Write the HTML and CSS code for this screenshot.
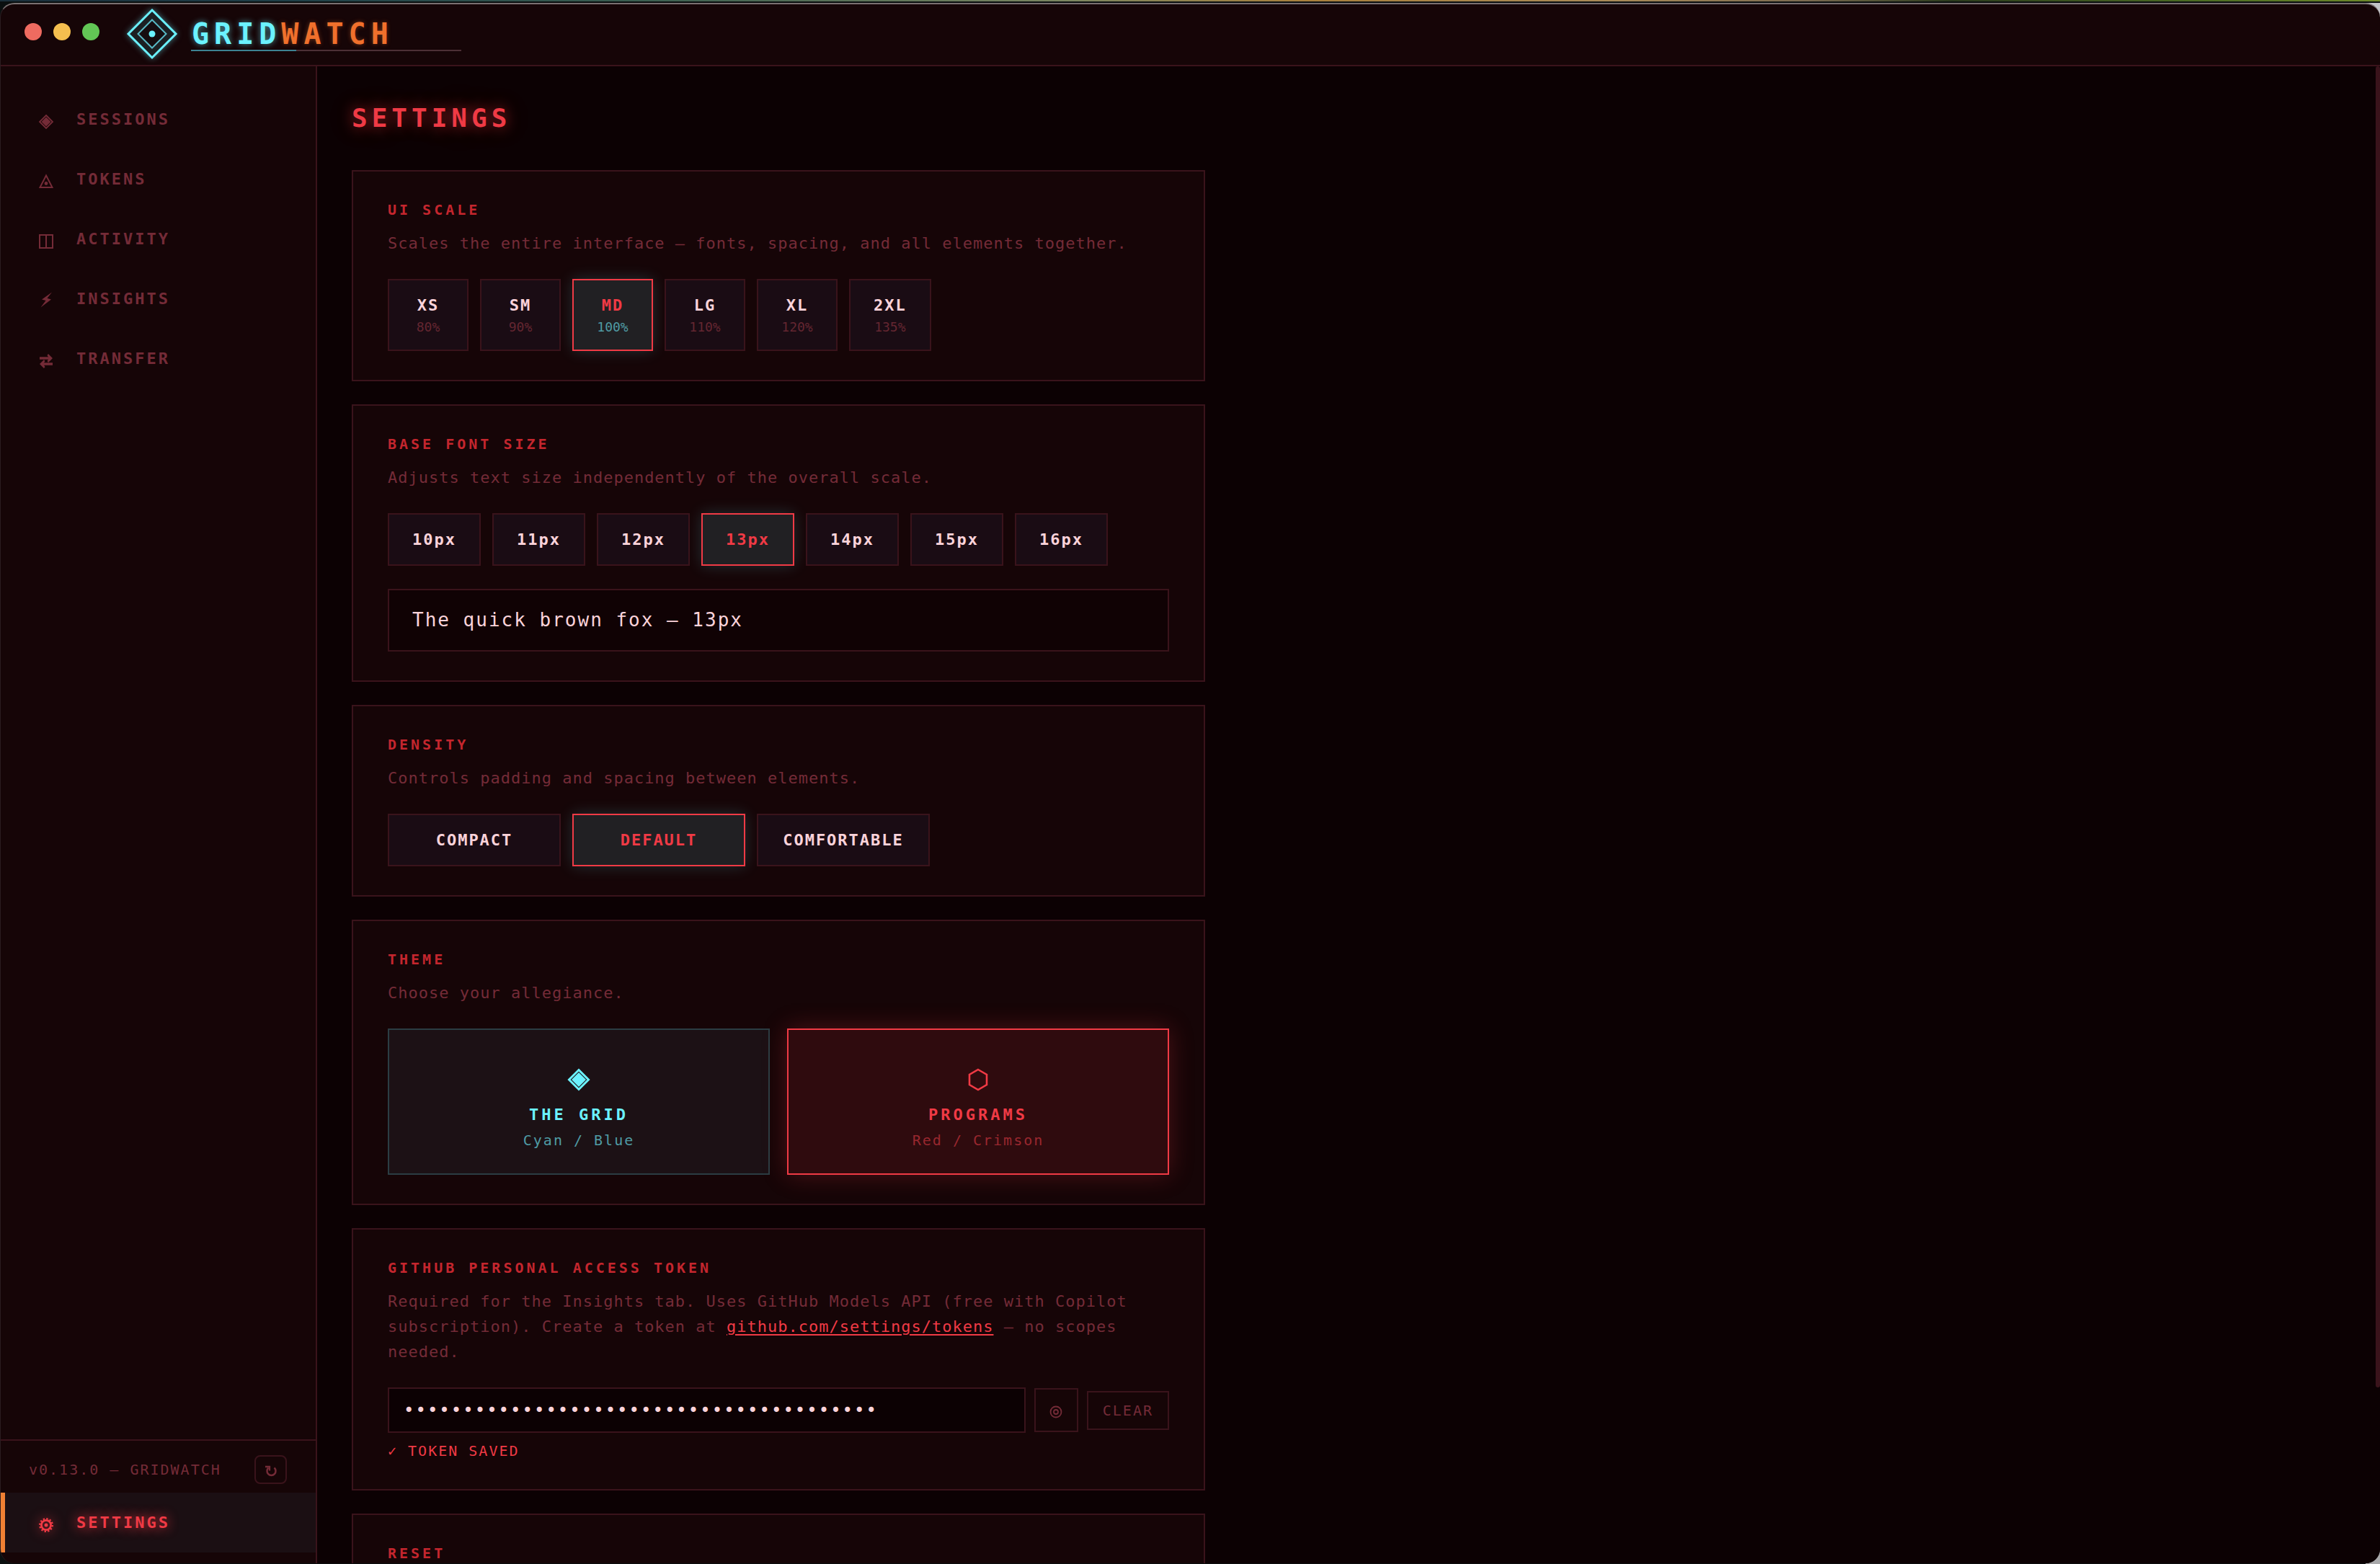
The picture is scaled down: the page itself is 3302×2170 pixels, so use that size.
FILE: index.html
```html
<!DOCTYPE html>
<html lang="en">
<head>
<meta charset="utf-8">
<meta name="viewport" content="width=device-width, initial-scale=1">
<title>GridWatch – Settings</title>
<link rel="stylesheet" href="styles.css">
</head>
<body>
<div class="window">
  <header class="titlebar">
    <div class="lights">
      <button class="light light-close" aria-label="Close"></button>
      <button class="light light-min" aria-label="Minimise"></button>
      <button class="light light-max" aria-label="Zoom"></button>
    </div>
    <div class="brand">
      <svg class="brand-mark" viewBox="0 0 80 80" aria-hidden="true">
        <path d="M40 7 73 40 40 73 7 40Z" fill="#1c2023" stroke="#6bf2ff" stroke-width="3"/>
        <path d="M40 20.500 59.500 40 40 59.500 20.500 40Z" fill="#160d10" stroke="#58b8c4" stroke-width="2"/>
        <circle cx="40" cy="40" r="4.500" fill="#6bf2ff"/>
      </svg>
      <div class="wordmark"><span class="word-grid">GRID</span><span class="word-watch">WATCH</span></div>
    </div>
  </header>

  <div class="body">
    <aside class="sidebar">
      <nav class="nav" aria-label="Main">
        <a class="nav-item" href="#sessions">
          <svg class="nav-icon" viewBox="0 0 20 20" aria-hidden="true"><path d="M10 1 19 10 10 19 1 10Z" fill="none" stroke="currentColor" stroke-width="1.800"/><path d="M10 3.500 16.500 10 10 16.500 3.500 10Z" fill="currentColor"/></svg>
          <span>SESSIONS</span>
        </a>
        <a class="nav-item" href="#tokens">
          <svg class="nav-icon" viewBox="0 0 20 20" aria-hidden="true"><path d="M10 1.500 18.500 18H1.500Z" fill="none" stroke="currentColor" stroke-width="2"/><circle cx="10" cy="12.500" r="2.400" fill="currentColor"/></svg>
          <span>TOKENS</span>
        </a>
        <a class="nav-item" href="#activity">
          <svg class="nav-icon" viewBox="0 0 20 20" aria-hidden="true"><path d="M1 1H19V19H1ZM10 1V19" fill="none" stroke="currentColor" stroke-width="2"/></svg>
          <span>ACTIVITY</span>
        </a>
        <a class="nav-item" href="#insights">
          <svg class="nav-icon" viewBox="0 0 20 20" aria-hidden="true"><path d="M18 -2.500 4 7.500 9.500 9 2.500 18.500 17 7.500 11.500 5.800Z" fill="currentColor"/></svg>
          <span>INSIGHTS</span>
        </a>
        <a class="nav-item" href="#transfer">
          <svg class="nav-icon" viewBox="0 0 20 20" aria-hidden="true"><path d="M1 6H15M19 14H5" fill="none" stroke="currentColor" stroke-width="3.400"/><path d="M13 0 19 6 13 12 11.500 10 14 6 11.500 2ZM7 8 1 14 7 20 8.500 18 6 14 8.500 10Z" fill="currentColor"/></svg>
          <span>TRANSFER</span>
        </a>
      </nav>
      <div class="sidebar-foot">
        <span class="version">v0.13.0 — GRIDWATCH</span>
        <button class="refresh" aria-label="Check for updates">
          <svg viewBox="0 0 16 16" aria-hidden="true"><path d="M4.500 3.500A6 6 0 1 0 12.500 3.500" fill="none" stroke="currentColor" stroke-width="2.500"/><path d="M0 2H6V7.500" fill="none" stroke="currentColor" stroke-width="2.300"/></svg>
        </button>
      </div>
      <a class="nav-item nav-item-active" href="#settings" aria-current="page">
        <svg class="nav-icon" viewBox="0 0 20 20" aria-hidden="true"><circle cx="10" cy="10" r="6.600" fill="none" stroke="currentColor" stroke-width="2.800"/><circle cx="10" cy="10" r="8.800" fill="none" stroke="currentColor" stroke-width="2.400" stroke-dasharray="2.300 2.307"/><circle cx="10" cy="10" r="2.500" fill="currentColor"/></svg>
        <span>SETTINGS</span>
      </a>
    </aside>

    <main class="main">
      <h1 class="page-title">SETTINGS</h1>
      <div class="cards">
        <section class="card">
          <h2 class="card-title">UI SCALE</h2>
          <p class="card-desc">Scales the entire interface — fonts, spacing, and all elements together.</p>
          <div class="options">
            <button class="opt">XS<small>80%</small></button>
            <button class="opt">SM<small>90%</small></button>
            <button class="opt opt-on" aria-pressed="true">MD<small>100%</small></button>
            <button class="opt">LG<small>110%</small></button>
            <button class="opt">XL<small>120%</small></button>
            <button class="opt">2XL<small>135%</small></button>
          </div>
        </section>

        <section class="card">
          <h2 class="card-title">BASE FONT SIZE</h2>
          <p class="card-desc">Adjusts text size independently of the overall scale.</p>
          <div class="options">
            <button class="opt">10px</button>
            <button class="opt">11px</button>
            <button class="opt">12px</button>
            <button class="opt opt-on" aria-pressed="true">13px</button>
            <button class="opt">14px</button>
            <button class="opt">15px</button>
            <button class="opt">16px</button>
          </div>
          <div class="preview">The quick brown fox — 13px</div>
        </section>

        <section class="card">
          <h2 class="card-title">DENSITY</h2>
          <p class="card-desc">Controls padding and spacing between elements.</p>
          <div class="options">
            <button class="opt opt-wide">COMPACT</button>
            <button class="opt opt-wide opt-on" aria-pressed="true">DEFAULT</button>
            <button class="opt opt-wide">COMFORTABLE</button>
          </div>
        </section>

        <section class="card">
          <h2 class="card-title">THEME</h2>
          <p class="card-desc">Choose your allegiance.</p>
          <div class="themes">
            <button class="theme theme-grid">
              <svg class="theme-icon" viewBox="0 0 32 32" aria-hidden="true"><path d="M16 2.500 29.500 16 16 29.500 2.500 16Z" fill="none" stroke="currentColor" stroke-width="3"/><path d="M16 6 26 16 16 26 6 16Z" fill="currentColor"/></svg>
              <span class="theme-name">THE GRID</span>
              <span class="theme-sub">Cyan / Blue</span>
            </button>
            <button class="theme theme-programs" aria-pressed="true">
              <svg class="theme-icon" viewBox="0 0 32 32" aria-hidden="true"><path d="M16 2 28 9V23L16 30 4 23V9Z" fill="none" stroke="currentColor" stroke-width="2.600"/></svg>
              <span class="theme-name">PROGRAMS</span>
              <span class="theme-sub">Red / Crimson</span>
            </button>
          </div>
        </section>

        <section class="card">
          <h2 class="card-title"><label for="token">GITHUB PERSONAL ACCESS TOKEN</label></h2>
          <p class="card-desc">Required for the Insights tab. Uses GitHub Models API (free with Copilot subscription). Create a token at <a class="link" href="#tokens">github.com/settings/tokens</a> — no scopes needed.</p>
          <div class="token-row">
            <input class="token-input" id="token" type="password" value="0123456789012345678901234567890123456789">
            <button class="reveal" aria-label="Show token">
              <svg viewBox="0 0 18 18" aria-hidden="true"><circle cx="9" cy="9" r="7.500" fill="none" stroke="currentColor" stroke-width="1.800"/><circle cx="9" cy="9" r="3" fill="none" stroke="currentColor" stroke-width="1.800"/></svg>
            </button>
            <button class="clear">CLEAR</button>
          </div>
          <p class="saved">✓ TOKEN SAVED</p>
        </section>

        <section class="card card-reset">
          <h2 class="card-title">RESET</h2>
        </section>
      </div>
      <div class="scroll-thumb"></div>
    </main>
  </div>
</div>
</body>
</html>
```
FILE: styles.css
```css
:root {
  --bg: #0c0103;
  --panel: #160507;
  --line: #3a131b;
  --dim: #742b37;
  --red: #f03a45;
  --crimson: #c4262e;
  --pink: #fbd3da;
  --cyan: #6bf2ff;
  --teal: #4f9ba4;
}

* { box-sizing: border-box; }

body {
  margin: 0;
  height: 100vh;
  padding-top: 4px;
  overflow: hidden;
  background:
    linear-gradient(90deg, #1b2f3b, #1f3f48 12%, #3b5f50 27%, #7c8660 45%, #a9803c 55%, #a88a58 68%, #7a6a50 76%, #2a3a1c 82%, #4a6a22 92%, #6f8a2a) 0 0 / 100% 2px no-repeat,
    linear-gradient(#c2c2c6, #c2c2c6) right 4px / 20px 20px no-repeat,
    linear-gradient(#a8a8aa, #a8a8aa) right bottom / 20px 20px no-repeat,
    #0a0f0f;
  background-position: 0 0, right 0 top 4px, right 0 bottom 0;
  color: var(--pink);
  font-family: "DejaVu Sans Mono", monospace;
  font-size: 22px;
}

button, input { font-family: inherit; margin: 0; }
button { cursor: pointer; }
h1, h2, p { margin: 0; }

.window {
  display: flex;
  flex-direction: column;
  height: calc(100vh - 5px);
  overflow: hidden;
  border-top: 2px solid #7b7172;
  border-left: 1px solid #2b1d20;
  border-radius: 20px;
  background: var(--panel);
}

/* Title bar */
.titlebar {
  display: flex;
  flex: none;
  align-items: center;
  height: 86px;
  padding-left: 33px;
  gap: 33px;
  border-bottom: 2px solid var(--line);
}
.lights { display: flex; gap: 16px; padding-bottom: 8px; }
.light { width: 24px; height: 24px; padding: 0; border: 0; border-radius: 50%; }
.light-close { background: #ee6b60; }
.light-min { background: #f5bf4f; }
.light-max { background: #62c655; }
.brand { display: flex; align-items: center; gap: 14px; }
.brand-mark { width: 80px; height: 80px; margin-bottom: 2px; filter: drop-shadow(0 0 4px rgba(107, 242, 255, .5)); }
.wordmark {
  width: 375px;
  padding-left: 1px;
  border-bottom: 2px solid;
  border-image: linear-gradient(90deg, #3d8292 39%, #4c3036 39%, #4c3036) 1;
  font-size: 40px;
  font-weight: 700;
  line-height: 44px;
  letter-spacing: 7px;
}
.word-grid { color: var(--cyan); text-shadow: 0 0 8px rgba(107, 242, 255, .6); }
.word-watch { color: #f0702c; text-shadow: 0 0 6px rgba(240, 112, 44, .4); }

/* Sidebar */
.body { display: flex; flex: 1; min-height: 0; }
.sidebar {
  display: flex;
  flex: none;
  flex-direction: column;
  width: 439px;
  padding: 32px 0 15px;
  border-right: 2px solid var(--line);
}
.nav { flex: 1; }
.nav-item {
  display: flex;
  align-items: center;
  height: 83px;
  padding-left: 53px;
  gap: 32px;
  color: var(--dim);
  font-weight: 700;
  letter-spacing: 3px;
  text-decoration: none;
}
.nav-icon { width: 20px; height: 20px; margin-top: 6px; overflow: visible; }
.nav-item-active {
  padding-left: 47px;
  border-left: 6px solid #f08033;
  background: #1b0f13;
  color: var(--red);
  text-shadow: 0 0 16px var(--red);
}
.nav-item-active .nav-icon { filter: drop-shadow(0 0 8px rgba(240, 58, 69, .6)); }
.sidebar-foot {
  display: flex;
  align-items: center;
  justify-content: space-between;
  padding: 20px 40px 12px 39px;
  border-top: 2px solid var(--line);
}
.version { color: var(--dim); font-size: 20px; letter-spacing: 2px; }
.refresh {
  display: grid;
  place-items: center;
  width: 45px;
  height: 40px;
  padding: 3px 0 0;
  border: 2px solid var(--line);
  border-radius: 8px;
  background: none;
  color: var(--dim);
}
.refresh svg { width: 16px; height: 16px; }

/* Main */
.main {
  position: relative;
  flex: 1;
  padding: 48px;
  overflow: hidden;
  background: var(--bg);
}
.page-title {
  margin-bottom: 48px;
  color: var(--red);
  font-size: 36px;
  line-height: 48px;
  letter-spacing: 6px;
  text-shadow: 0 0 20px rgba(240, 58, 69, .7), 0 0 60px rgba(240, 58, 69, .2);
}
.cards { display: flex; flex-direction: column; gap: 32px; max-width: 1184px; }
.card { padding: 40px 48px; border: 2px solid var(--line); background: var(--panel); }
.card-reset { min-height: 200px; }
.card-title {
  margin-bottom: 16px;
  color: var(--crimson);
  font-size: 20px;
  line-height: 26px;
  letter-spacing: 4px;
}
.card-desc { margin-bottom: 32px; color: var(--dim); line-height: 35px; letter-spacing: 1px; }
.link { color: var(--red); text-underline-offset: 3px; text-decoration-thickness: 2px; }

.options { display: flex; gap: 16px; }
.opt {
  display: flex;
  flex-direction: column;
  align-items: center;
  gap: 4px;
  min-width: 112px;
  padding: 20px 32px;
  border: 2px solid var(--line);
  background: #1a0c14;
  color: var(--pink);
  font-size: 22px;
  font-weight: 700;
  line-height: 29px;
  letter-spacing: 2px;
}
.opt small { color: #642631; font-size: 18px; font-weight: 400; line-height: 23px; letter-spacing: 0; }
.opt-wide { min-width: 240px; }
.opt-on {
  border-color: var(--red);
  background: #212023;
  color: var(--red);
  box-shadow: 0 0 20px rgba(107, 242, 255, .18);
}
.opt-on small { color: var(--teal); }
.preview {
  margin-top: 32px;
  padding: 24px 32px;
  border: 2px solid var(--line);
  background: #100204;
  font-size: 26px;
  line-height: 35px;
  letter-spacing: 2px;
}

.themes { display: grid; grid-template-columns: 1fr 1fr; gap: 24px; }
.theme {
  display: flex;
  flex-direction: column;
  align-items: center;
  padding: 53px 32px 32px;
  border: 2px solid;
  letter-spacing: 2px;
}
.theme-icon { width: 32px; height: 32px; margin-bottom: 18px; }
.theme-name { margin-bottom: 8px; font-size: 22px; font-weight: 700; line-height: 29px; letter-spacing: 4px; }
.theme-sub { font-size: 20px; line-height: 27px; }
.theme-grid { border-color: #2b3d43; background: #1c1115; color: var(--cyan); }
.theme-grid .theme-sub { color: var(--teal); }
.theme-programs {
  border-color: var(--red);
  background: #2f0b0e;
  color: var(--red);
  box-shadow: 0 0 32px rgba(240, 58, 69, .25);
}
.theme-programs .theme-sub { color: #99272e; }

.token-row { display: flex; align-items: center; gap: 12px; }
.token-input {
  flex: 1;
  min-width: 0;
  height: 63px;
  padding: 0 20px;
  border: 2px solid var(--line);
  border-radius: 0;
  background: var(--bg);
  color: var(--pink);
  font-size: 24px;
  letter-spacing: 2px;
}
.reveal, .clear { border: 2px solid var(--line); background: none; color: var(--dim); }
.reveal { display: grid; place-items: center; width: 61px; height: 61px; padding: 5px 0 0; }
.reveal svg { width: 18px; height: 18px; }
.clear { height: 54px; padding: 0 20px; font-size: 20px; letter-spacing: 2px; }
.saved { margin-top: 12px; color: var(--red); font-size: 20px; line-height: 26px; letter-spacing: 2px; }

.scroll-thumb {
  position: absolute;
  top: 0;
  right: 0;
  width: 6px;
  height: calc(100% - 244px);
  border-radius: 4px;
  background: var(--line);
}
```
